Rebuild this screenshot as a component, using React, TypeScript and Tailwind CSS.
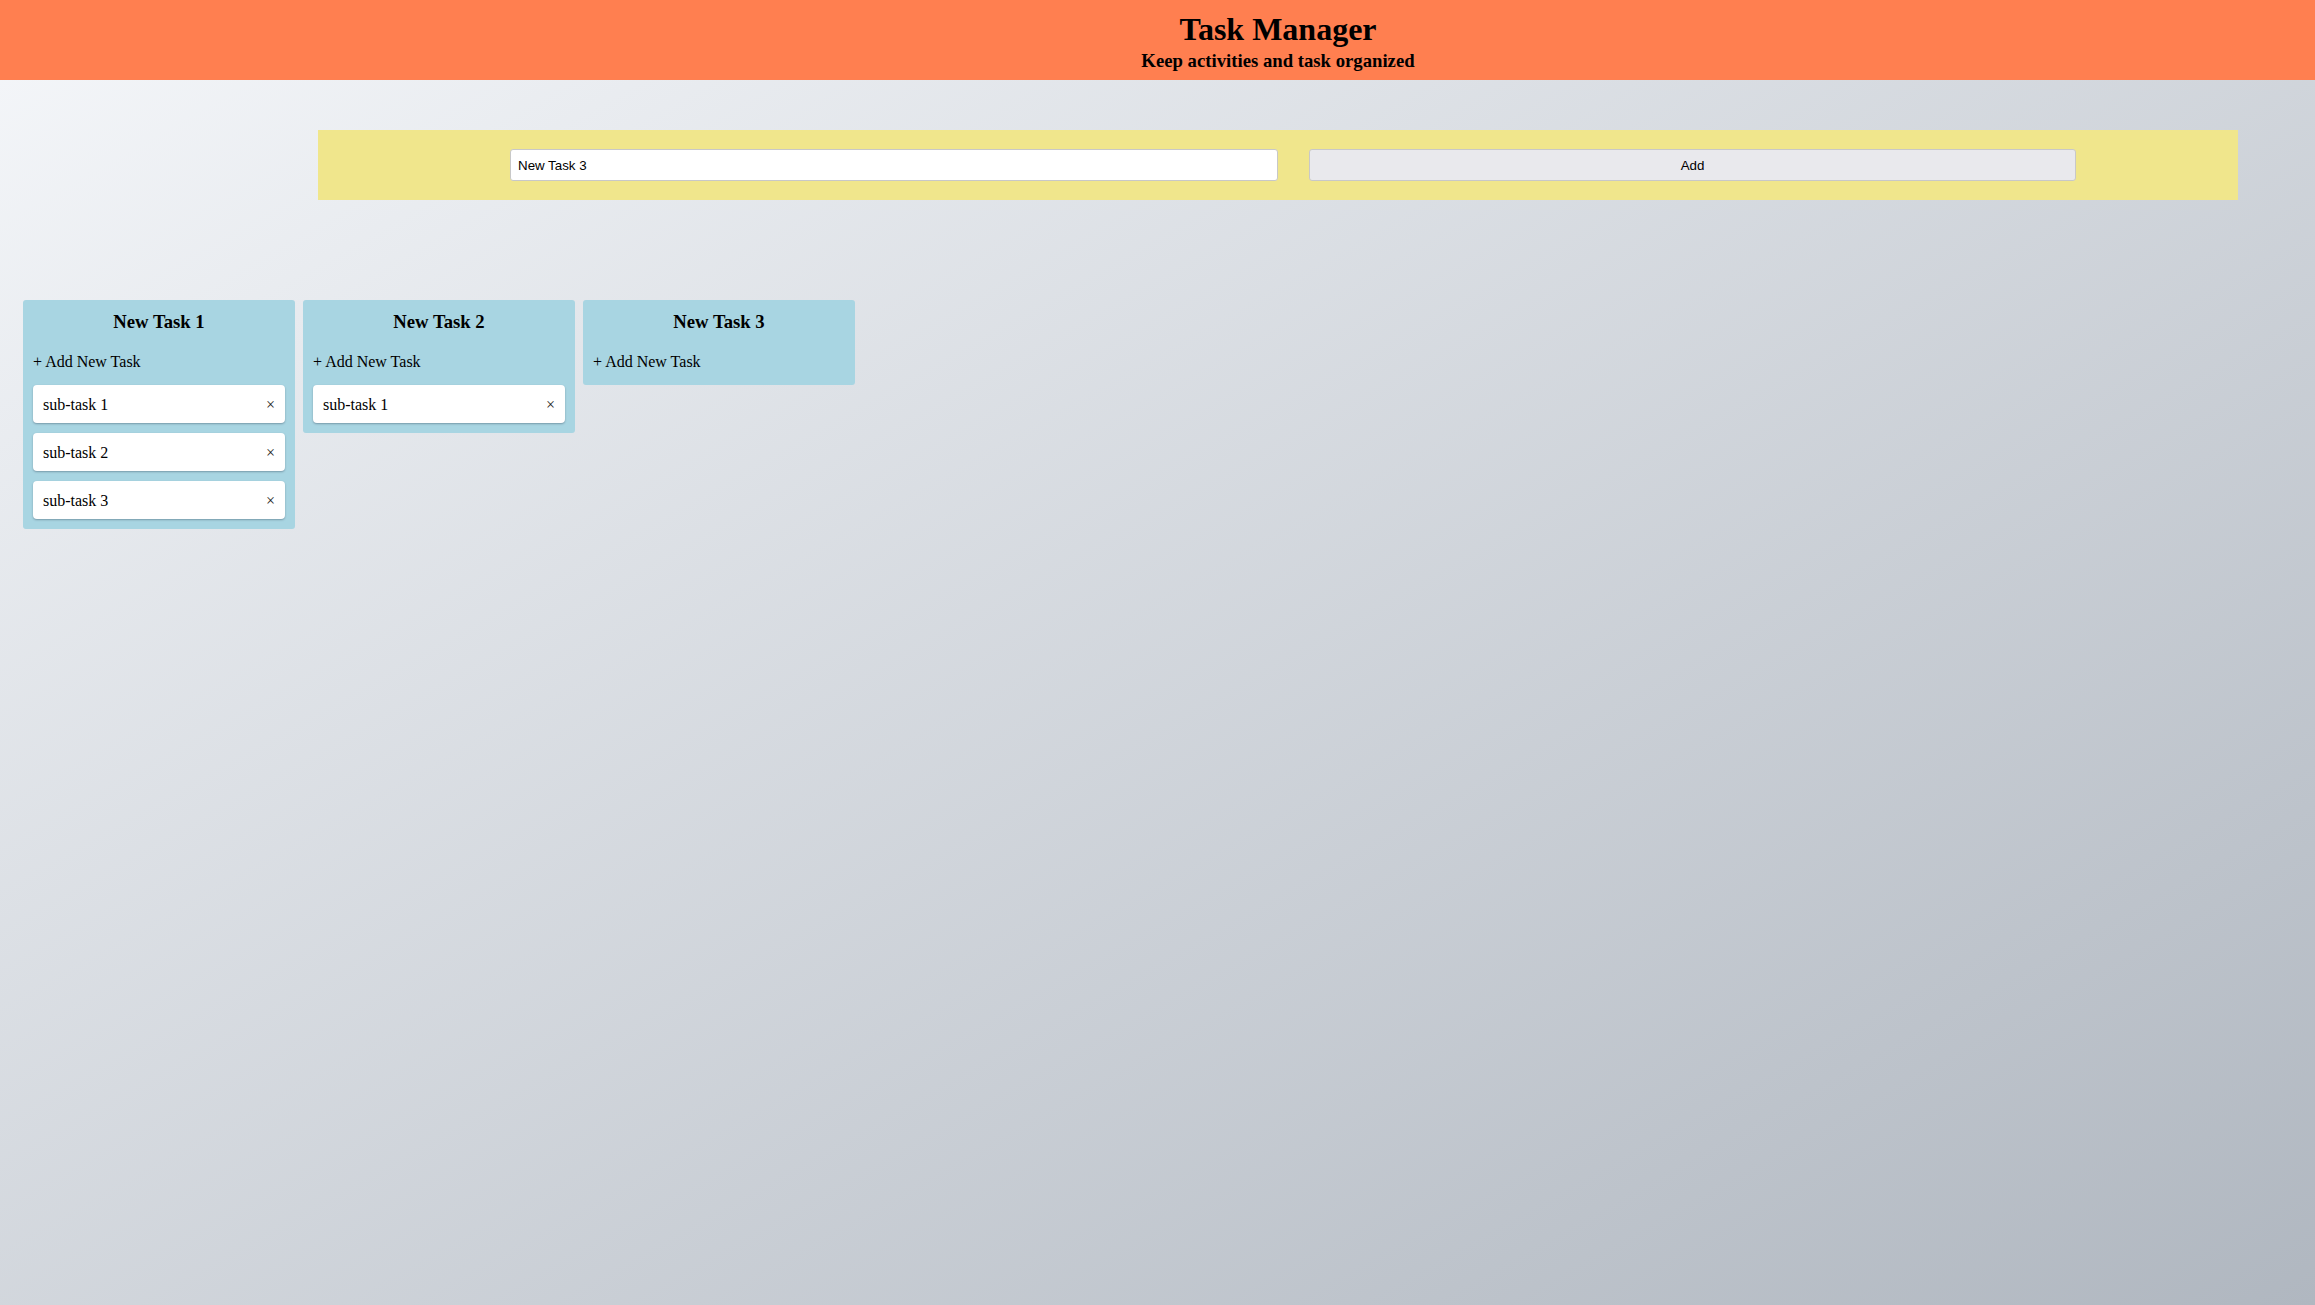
import { useState } from "react"

type Column = { title: string; subtasks: string[] }

const initial: Column[] = [
  { title: "New Task 1", subtasks: ["sub-task 1", "sub-task 2", "sub-task 3"] },
  { title: "New Task 2", subtasks: ["sub-task 1"] },
  { title: "New Task 3", subtasks: [] },
]

function TaskColumn({ col }: { col: Column }) {
  return (
    <div className="w-[272px] shrink-0 rounded-[3px] bg-[#a8d5e2] px-[10px] pt-[10px] pb-[10px]">
      <h3 className="text-center text-[18.72px] font-bold leading-[24px]">{col.title}</h3>
      <div className="mt-[18px] pb-[3px] text-[16px] leading-[20px]">+ Add New Task</div>
      {col.subtasks.length > 0 && (
        <div className="mt-[10px] flex flex-col gap-[10px]">
          {col.subtasks.map((s, i) => (
            <div
              key={i}
              className="flex h-[38px] items-center justify-between rounded-[4px] bg-white pt-[2px] pl-[10px] pr-[10px] text-[16px] shadow-[0_1px_2px_rgba(60,80,100,0.45)]"
            >
              <span>{s}</span>
              <button className="text-[16px] leading-none text-[#222]">×</button>
            </div>
          ))}
        </div>
      )}
    </div>
  )
}

export default function App() {
  const [text, setText] = useState("New Task 3")

  return (
    <div className="min-h-screen bg-linear-to-br from-[#f5f7fa] to-[#b0b7c0] font-['Liberation_Serif',serif] text-black">
      <header className="h-[80px] bg-[#ff7f50] pt-[13px]">
        <div className="ml-[318px] flex w-[1920px] flex-col items-center">
          <h1 className="text-[32px] font-bold leading-[32px]">Task Manager</h1>
          <h3 className="mt-[6px] text-[18.72px] font-bold leading-[20px]">Keep activities and task organized</h3>
        </div>
      </header>

      <div className="mt-[50px] ml-[318px] flex h-[70px] w-[1920px] items-center bg-[#f0e68c] pl-[192px]">
        <input
          value={text}
          onChange={(e) => setText(e.target.value)}
          className="h-[32px] w-[768px] rounded-[3px] border border-[#c8c8c8] bg-white px-[7px] pt-[1px] font-['Liberation_Sans',sans-serif] text-[13.33px] outline-none"
        />
        <button className="ml-[31px] h-[32px] w-[767px] rounded-[3px] border border-[#c8c8c8] bg-[#e9e9ed] pt-[1px] font-['Liberation_Sans',sans-serif] text-[13.33px]">
          Add
        </button>
      </div>

      <div className="mt-[100px] ml-[23px] flex items-start gap-[8px]">
        {initial.map((c) => (
          <TaskColumn key={c.title} col={c} />
        ))}
      </div>
    </div>
  )
}
